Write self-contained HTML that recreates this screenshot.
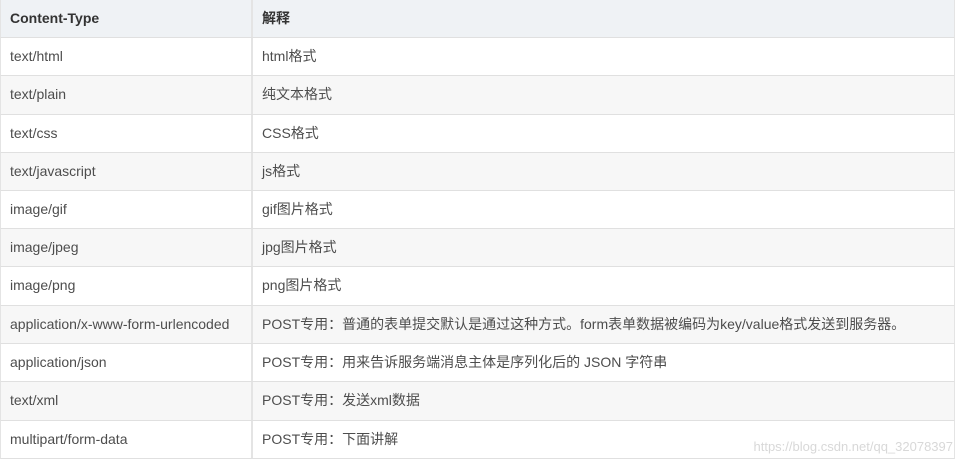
<!DOCTYPE html>
<html><head><meta charset="utf-8"><style>
body{margin:0;background:#fff;width:957px;height:463px;overflow:hidden;font-family:"Liberation Sans","Noto Sans CJK SC",sans-serif;font-size:14px;color:#4d4d4d}
.r{position:absolute;left:0;width:955px;box-sizing:border-box;border-top:1px solid #e0e0e0;border-left:1px solid #e4e4e4;border-right:1px solid #e4e4e4}
.c1,.c2{position:absolute;top:0;bottom:2px;display:flex;align-items:center}
.c1{left:9px}
.c2{left:250px;padding-left:9px;border-left:2px solid #e4e4e4;right:0;top:0;bottom:0}
.c2 span{position:relative;top:-1px}
.h{background:#eff2f5;font-weight:bold;color:#333;border-top:none}
.g{background:#f7f7f7}
.wm{position:absolute;right:4px;top:439px;font-size:13px;color:#d8d8d8}
</style></head><body>
<div class="r h" style="top:0;height:37px"><div class="c1">Content-Type</div><div class="c2"><span>解释</span></div></div>
<div class="r" style="top:37px;height:38px"><div class="c1">text/html</div><div class="c2"><span>html格式</span></div></div>
<div class="r g" style="top:75px;height:39px"><div class="c1">text/plain</div><div class="c2"><span>纯文本格式</span></div></div>
<div class="r" style="top:114px;height:38px"><div class="c1">text/css</div><div class="c2"><span>CSS格式</span></div></div>
<div class="r g" style="top:152px;height:38px"><div class="c1">text/javascript</div><div class="c2"><span>js格式</span></div></div>
<div class="r" style="top:190px;height:38px"><div class="c1">image/gif</div><div class="c2"><span>gif图片格式</span></div></div>
<div class="r g" style="top:228px;height:38px"><div class="c1">image/jpeg</div><div class="c2"><span>jpg图片格式</span></div></div>
<div class="r" style="top:266px;height:39px"><div class="c1">image/png</div><div class="c2"><span>png图片格式</span></div></div>
<div class="r g" style="top:305px;height:38px"><div class="c1">application/x-www-form-urlencoded</div><div class="c2"><span>POST专用：普通的表单提交默认是通过这种方式。form表单数据被编码为key/value格式发送到服务器。</span></div></div>
<div class="r" style="top:343px;height:38px"><div class="c1">application/json</div><div class="c2"><span>POST专用：用来告诉服务端消息主体是序列化后的 JSON 字符串</span></div></div>
<div class="r g" style="top:381px;height:39px"><div class="c1">text/xml</div><div class="c2"><span>POST专用：发送xml数据</span></div></div>
<div class="r" style="top:420px;height:39px;border-bottom:1px solid #e0e0e0"><div class="c1">multipart/form-data</div><div class="c2"><span>POST专用：下面讲解</span></div></div>
<div class="wm">https://blog.csdn.net/qq_32078397</div>
</body></html>
